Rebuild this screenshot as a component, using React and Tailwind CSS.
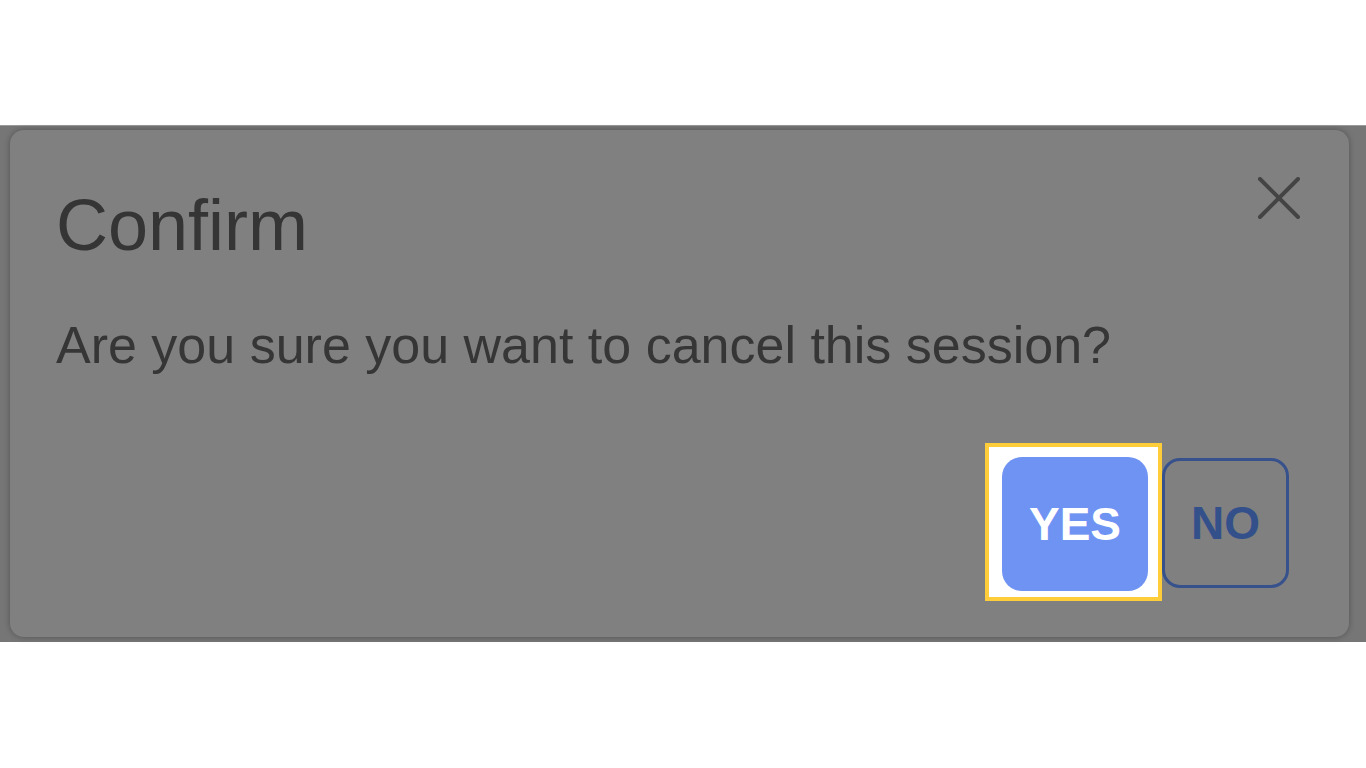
const CloseIcon = () => (
    <svg width="44" height="42" viewBox="0 0 44 42" fill="none">
        <path d="M3 2 L41 40 M41 2 L3 40" stroke="#444" strokeWidth="4" strokeLinecap="round" />
    </svg>
);

const App = () => {
    return (
        <div className="min-h-screen w-full bg-white font-['Liberation_Sans',Arial,sans-serif]">
            <div className="h-[125px]" />
            <div className="flex h-[517px] flex-col border-t border-[#9a9a9a] bg-[#767676] pl-[10px] pr-[17px] pt-[4px] pb-[5px]">
                <div className="flex flex-1 flex-col rounded-[14px] bg-[#808080] pl-[46px] pr-[60px] pt-[59px] shadow-[0_0_6px_rgba(0,0,0,0.3)]">
                    <div className="flex items-start justify-between">
                        <h2 className="text-[72px] leading-none font-normal text-[#353535]">Confirm</h2>
                        <button className="-mr-[12px] -mt-[12px]" aria-label="close">
                            <CloseIcon />
                        </button>
                    </div>
                    <p className="mt-[58px] text-[52px] leading-none text-[#363636]">
                        Are you sure you want to cancel this session?
                    </p>
                    <div className="mt-[72px] flex items-start justify-end">
                        <div className="border-4 border-[#ffcd3a] bg-white pt-[10px] pb-[6px] pl-[13px] pr-[10px]">
                            <button className="flex h-[134px] w-[146px] items-center justify-center rounded-[20px] bg-[#6f93f3] text-[46px] font-bold text-white">
                                YES
                            </button>
                        </div>
                        <button className="mt-[15px] flex h-[130px] w-[127px] items-center justify-center rounded-[18px] border-[3px] border-[#36518c] text-[46px] font-bold text-[#34508b]">
                            NO
                        </button>
                    </div>
                </div>
            </div>
        </div>
    );
};

export default App;
